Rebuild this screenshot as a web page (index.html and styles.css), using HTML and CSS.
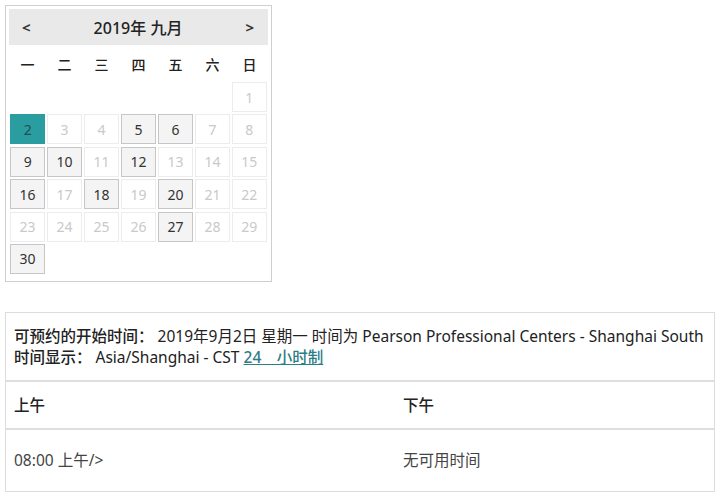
FILE: index.html
```html
<!DOCTYPE html>
<html lang="zh-CN">
<head>
<meta charset="utf-8">
<title>预约时间</title>
<link rel="stylesheet" href="styles.css">
</head>
<body>
<div class="page">
  <div class="calendar">
    <div class="cal-head">
      <span class="nav">&lt;</span>
      <span class="title">2019年 九月</span>
      <span class="nav">&gt;</span>
    </div>
    <div class="weekdays">
      <span>一</span><span>二</span><span>三</span><span>四</span><span>五</span><span>六</span><span>日</span>
    </div>
    <div class="days">
      <span class="empty"></span><span class="empty"></span><span class="empty"></span><span class="empty"></span><span class="empty"></span><span class="empty"></span>
      <span class="day off">1</span>
      <span class="day sel">2</span>
      <span class="day off">3</span>
      <span class="day off">4</span>
      <span class="day on">5</span>
      <span class="day on">6</span>
      <span class="day off">7</span>
      <span class="day off">8</span>
      <span class="day on">9</span>
      <span class="day on">10</span>
      <span class="day off">11</span>
      <span class="day on">12</span>
      <span class="day off">13</span>
      <span class="day off">14</span>
      <span class="day off">15</span>
      <span class="day on">16</span>
      <span class="day off">17</span>
      <span class="day on">18</span>
      <span class="day off">19</span>
      <span class="day on">20</span>
      <span class="day off">21</span>
      <span class="day off">22</span>
      <span class="day off">23</span>
      <span class="day off">24</span>
      <span class="day off">25</span>
      <span class="day off">26</span>
      <span class="day on">27</span>
      <span class="day off">28</span>
      <span class="day off">29</span>
      <span class="day on">30</span>
    </div>
  </div>

  <div class="slots">
    <div class="info">
      <div><b>可预约的开始时间：</b> 2019年9月2日 星期一 时间为 Pearson Professional Centers - Shanghai South</div>
      <div><b>时间显示：</b> Asia/Shanghai - CST <a class="link" href="#">24　小时制</a></div>
    </div>
    <div class="row head">
      <div class="col">上午</div>
      <div class="col">下午</div>
    </div>
    <div class="row body">
      <div class="col">08:00 上午/&gt;</div>
      <div class="col">无可用时间</div>
    </div>
  </div>
</div>
</body>
</html>
```

FILE: styles.css
```css
html, body {
  margin: 0;
  padding: 0;
  background: #ffffff;
}

body {
  font-family: "Noto Sans", "Noto Sans CJK SC", sans-serif;
  color: #333333;
}

.page {
  padding: 5px 7px 0 5px;
}

.calendar {
  width: 259px;
  border: 1px solid #cfcfcf;
  padding: 3px 3px 7px 3px;
}

.cal-head {
  height: 36px;
  background: #e9e9e9;
  display: flex;
  align-items: center;
  justify-content: space-between;
  padding: 0 14px 0 13px;
  font-size: 16px;
}

.cal-head .nav {
  font-weight: bold;
  font-size: 15px;
}

.cal-head .title {
  font-weight: 500;
  color: #222;
}

.weekdays {
  display: grid;
  grid-template-columns: repeat(7, 1fr);
  column-gap: 2px;
  padding: 0 1px;
  height: 37px;
  align-items: center;
  font-size: 14px;
  font-weight: 500;
  color: #222;
  text-align: center;
}

.days {
  display: grid;
  grid-template-columns: repeat(7, 1fr);
  column-gap: 1.7px;
  row-gap: 2.4px;
  padding: 0 1px;
}

.day, .empty {
  height: 30px;
  box-sizing: border-box;
  display: flex;
  align-items: center;
  justify-content: center;
  font-size: 14px;
}

.day.off {
  border: 1px solid #ececec;
  color: #c9c9c9;
}

.day.on {
  border: 1px solid #c6c6c6;
  background: #f4f4f4;
  color: #333;
}

.day.sel {
  background: #2a9da1;
  color: #1f4e55;
  border: 1px solid #2a9da1;
}

.slots {
  margin-top: 30px;
  width: 708px;
  border: 1px solid #dcdcdc;
  font-size: 15.5px;
}

.info {
  height: 69px;
  box-sizing: border-box;
  padding: 13px 8px 0 8px;
  line-height: 21px;
  border-bottom: 2px solid #dedede;
  color: #222;
}

.info b {
  font-weight: 500;
}

.link {
  color: #2c7d86;
  text-decoration: underline;
  font-weight: 500;
}

.row {
  display: grid;
  grid-template-columns: 389px 1fr;
  align-items: center;
}

.row.head {
  height: 46px;
  border-bottom: 2px solid #dedede;
  font-weight: 500;
  color: #222;
}

.row.body {
  height: 61px;
  padding-bottom: 2px;
  box-sizing: border-box;
  color: #444;
}

.col {
  padding-left: 8px;
}
```
